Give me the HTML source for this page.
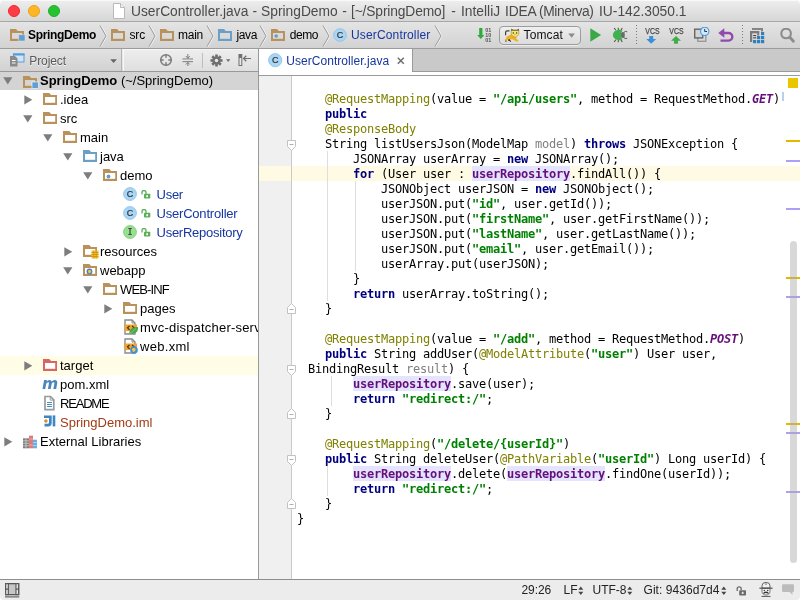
<!DOCTYPE html>
<html>
<head>
<meta charset="utf-8">
<title>UserController.java - SpringDemo</title>
<style>
*{box-sizing:border-box;margin:0;padding:0}
html,body{width:800px;height:600px;overflow:hidden;background:#fff}
body{will-change:transform;font-family:"Liberation Sans",sans-serif;font-size:13px;color:#000;position:relative}
.abs{position:absolute}
#titlebar{position:absolute;left:0;top:0;width:800px;height:22px;background:linear-gradient(#eeeeee,#d6d6d6);border-bottom:1px solid #a8a8a8;border-radius:4px 4px 0 0;box-shadow:inset 0 1px 0 #f9f9f9}
.tl{position:absolute;top:5px;width:12px;height:12px;border-radius:50%}
#title{position:absolute;left:131px;top:2.6px;font-size:13.8px;color:#4a4a4a;white-space:pre;line-height:18px}
#navbar{position:absolute;left:0;top:22px;width:800px;height:27px;background:linear-gradient(#e4e4e4,#d2d2d2);border-bottom:1px solid #9b9b9b}
.nav{position:absolute;top:5px;font-size:12px;line-height:16px;white-space:pre}
#leftpanel{position:absolute;left:0;top:49px;width:259px;height:530px;background:#fff;border-right:1px solid #999}
#lphead{position:absolute;left:0;top:0;width:258px;height:23px;background:linear-gradient(#eeeeee,#dfdfdf);border-bottom:1px solid #999;z-index:2;box-shadow:inset 0 1px 0 #f6f6f6}
.row{position:absolute;left:0;width:258px;height:19px;line-height:19px;font-size:13px;white-space:pre;overflow:hidden}
.row span.t{position:absolute;top:0}
.row svg{position:absolute}
.blue{color:#1636a0}
#tabs{position:absolute;left:259px;top:49px;width:541px;height:27px;background:#fff;border-bottom:1px solid #9a9a9a}
#tabgray{position:absolute;left:153px;top:0;width:388px;height:23px;background:#c9c9c9;border-left:1px solid #9a9a9a;border-bottom:1px solid #9a9a9a}
#gutter{position:absolute;left:259px;top:76px;width:33px;height:503px;background:#f0f0f0;border-right:1px solid #cacaca}
#code{position:absolute;left:292px;top:76px;width:508px;height:503px;background:#fff;overflow:hidden}
.ln{position:absolute;left:5px;height:15px;line-height:15px;font-family:"DejaVu Sans Mono","Liberation Mono",monospace;font-size:12px;letter-spacing:-0.224px;white-space:pre;color:#000}
.kw{color:#000080;font-weight:bold}
.an{color:#808000}
.st{color:#008000;font-weight:bold}
.fd{color:#660e7a;font-weight:bold}
.fdh{color:#660e7a;font-weight:bold;background:#e4e4ff}
.sf{color:#660e7a;font-weight:bold;font-style:italic}
.pm{color:#808080}
#stripe{position:absolute;left:787px;top:76px;width:13px;height:502px;background:#fff}
#status{position:absolute;left:0;top:579px;width:800px;height:21px;background:#ececec;border-top:1px solid #8e8e8e;border-radius:0 0 4px 4px}
.sb{position:absolute;top:2px;font-size:12px;line-height:16px;white-space:pre;color:#222}
</style>
</head>
<body>
<!-- TITLE BAR -->
<div id="titlebar">
  <div class="tl" style="left:8px;background:#fc3d48;border:1px solid #f3242f"></div>
  <div class="tl" style="left:28px;background:#fdb724;border:1px solid #f0a214"></div>
  <div class="tl" style="left:48px;background:#27c232;border:1px solid #1eb02a"></div>
  <svg class="abs" style="left:112px;top:2px" width="14" height="18" viewBox="0 0 14 18"><path d="M1.500 1.500h7l4 4v11h-11z" fill="#fff" stroke="#b9b9b9" stroke-width="1"/><path d="M8.5 1.5v4h4" fill="#f2f2f2" stroke="#b9b9b9" stroke-width="1"/></svg>
  <div id="title"><span class="abs" style="left:0px;top:0;">UserController.java </span><span class="abs" style="left:121.6px;top:0;">- </span><span class="abs" style="left:130px;top:0;">SpringDemo </span><span class="abs" style="left:211.3px;top:0;">- </span><span class="abs" style="left:220px;top:0;letter-spacing:-0.14px">[~/SpringDemo] </span><span class="abs" style="left:320.3px;top:0;">- </span><span class="abs" style="left:330px;top:0;">IntelliJ </span><span class="abs" style="left:374px;top:0;letter-spacing:-0.2px">IDEA </span><span class="abs" style="left:408px;top:0;letter-spacing:-0.42px">(Minerva) </span><span class="abs" style="left:468px;top:0;">IU-142.3050.1</span></div>
</div>
<!-- NAVBAR -->
<div id="navbar"><!--NAV-->
<svg class="abs" style="left:10px;top:7px" width="16" height="14" viewBox="0 0 16 14"><path d="M0 0h6l1.800 2h6.200v9.900h-14z" fill="#b8915b"/><rect x="2" y="4" width="10" height="5.800" fill="#dadada"/><rect x="8.800" y="5.800" width="6.200" height="6.200" fill="#5f9fd2" stroke="#dadada" stroke-width="0.600"/></svg>
<span class="nav" style="left:28px;letter-spacing:-0.33px"><b>SpringDemo</b></span>
<svg class="abs" style="left:99px;top:2px" width="10" height="24" viewBox="0 0 10 24"><path d="M2 1.500l6 10.500l-6 10.500" fill="none" stroke="#f4f4f4" stroke-width="1"/><path d="M1 1.500l6 10.500l-6 10.500" fill="none" stroke="#9c9c9c" stroke-width="1"/></svg>
<svg class="abs" style="left:111px;top:7px" width="16" height="14" viewBox="0 0 16 14"><path d="M0 0h6l1.800 2h6.200v9.900h-14z" fill="#b8915b"/><rect x="2" y="4" width="10" height="5.800" fill="#dadada"/></svg>
<span class="nav" style="left:129.4px;letter-spacing:-0.1px">src</span>
<svg class="abs" style="left:147.5px;top:2px" width="10" height="24" viewBox="0 0 10 24"><path d="M2 1.500l6 10.500l-6 10.500" fill="none" stroke="#f4f4f4" stroke-width="1"/><path d="M1 1.500l6 10.500l-6 10.500" fill="none" stroke="#9c9c9c" stroke-width="1"/></svg>
<svg class="abs" style="left:160px;top:7px" width="16" height="14" viewBox="0 0 16 14"><path d="M0 0h6l1.800 2h6.200v9.900h-14z" fill="#b8915b"/><rect x="2" y="4" width="10" height="5.800" fill="#dadada"/></svg>
<span class="nav" style="left:178px;letter-spacing:-0.25px">main</span>
<svg class="abs" style="left:206px;top:2px" width="10" height="24" viewBox="0 0 10 24"><path d="M2 1.500l6 10.500l-6 10.500" fill="none" stroke="#f4f4f4" stroke-width="1"/><path d="M1 1.500l6 10.500l-6 10.500" fill="none" stroke="#9c9c9c" stroke-width="1"/></svg>
<svg class="abs" style="left:218px;top:7px" width="16" height="14" viewBox="0 0 16 14"><path d="M0 0h6l1.800 2h6.200v9.900h-14z" fill="#6b9fc6"/><rect x="2" y="4" width="10" height="5.800" fill="#dadada"/></svg>
<span class="nav" style="left:236.5px;letter-spacing:-0.38px">java</span>
<svg class="abs" style="left:259px;top:2px" width="10" height="24" viewBox="0 0 10 24"><path d="M2 1.500l6 10.500l-6 10.500" fill="none" stroke="#f4f4f4" stroke-width="1"/><path d="M1 1.500l6 10.500l-6 10.500" fill="none" stroke="#9c9c9c" stroke-width="1"/></svg>
<svg class="abs" style="left:271px;top:7px" width="16" height="14" viewBox="0 0 16 14"><path d="M0 0h6l1.800 2h6.200v9.900h-14z" fill="#b8915b"/><rect x="2" y="4" width="10" height="5.800" fill="#dadada"/><circle cx="5.200" cy="7" r="1.800" fill="#5f9fd2"/></svg>
<span class="nav" style="left:289.7px;letter-spacing:-0.43px">demo</span>
<svg class="abs" style="left:321.6px;top:2px" width="10" height="24" viewBox="0 0 10 24"><path d="M2 1.500l6 10.500l-6 10.500" fill="none" stroke="#f4f4f4" stroke-width="1"/><path d="M1 1.500l6 10.500l-6 10.500" fill="none" stroke="#9c9c9c" stroke-width="1"/></svg>
<svg class="abs" style="left:333px;top:6px" width="14" height="14" viewBox="0 0 14 14"><circle cx="7" cy="7" r="6.300" fill="#aad6f6" stroke="#84bfe9" stroke-width="0.800"/><text x="7" y="10" text-anchor="middle" font-family="Liberation Sans, sans-serif" font-size="9" fill="#333" stroke="#333" stroke-width="0.200">C</text></svg>
<span class="nav" style="left:351px;letter-spacing:0.15px;color:#1636a0">UserController</span>
<svg class="abs" style="left:433.5px;top:2px" width="10" height="24" viewBox="0 0 10 24"><path d="M2 1.500l6 10.500l-6 10.500" fill="none" stroke="#f4f4f4" stroke-width="1"/><path d="M1 1.500l6 10.500l-6 10.500" fill="none" stroke="#9c9c9c" stroke-width="1"/></svg>
<svg class="abs" style="left:476.700px;top:5px" width="18" height="16" viewBox="0 0 18 16"><path d="M2.200 0.900h3.200v7.100h2l-3.600 4.100l-3.600-4.100h2z" fill="#2eaa3e"/><text x="8.300" y="4.8" font-family="Liberation Sans, sans-serif" font-size="5.400" font-weight="bold" fill="#555">01</text><text x="8.300" y="9.7" font-family="Liberation Sans, sans-serif" font-size="5.400" font-weight="bold" fill="#555">10</text><text x="8.300" y="14.7" font-family="Liberation Sans, sans-serif" font-size="5.400" font-weight="bold" fill="#555">01</text></svg>
<div class="abs" style="left:499px;top:4px;width:82px;height:19px;border:1px solid #9c9c9c;border-radius:4px;background:linear-gradient(#efefef,#dcdcdc);box-shadow:0 1px 0 rgba(255,255,255,0.6)"></div>
<svg class="abs" style="left:504px;top:6px" width="16" height="15" viewBox="0 0 16 15"><path d="M1.600 7.200v-2.600q0-1.700 1.700-1.700h2.200" fill="none" stroke="#3a3a3a" stroke-width="1.200"/><path d="M4.600 11l2.200 2.700M2 11.500v2.400M6 11.500l-1.800 1" fill="none" stroke="#3a3a3a" stroke-width="1.100"/><path d="M1.400 12.200l1.400-3.600l4.200-2l3.200 1.500l4.700 5.200l-2.600 0.300l-3.400-2l-4.200-0.600l-1.600 1.200l-0.600 1.800z" fill="#f0b020"/><path d="M7.200 2.300l0.300-1.700l1.700 1.700zM13 2.300l1.600-1.700l0.200 1.700z" fill="#3a3a3a"/><path d="M7.200 2.100h7.600v4.400l-2.600 2.600h-2.400l-2.600-2.600z" fill="#f8e66c" stroke="#7a6a2a" stroke-width="0.500"/><path d="M7.200 2.300h7.600" stroke="#5a4a2a" stroke-width="0.700"/><circle cx="9.300" cy="5" r="0.700" fill="#333"/><circle cx="12.600" cy="5" r="0.700" fill="#333"/><path d="M10.400 6.600h1.200l-0.600 1z" fill="#7a4a2a"/></svg>
<span class="nav" style="left:523.5px;letter-spacing:0.14px;color:#111">Tomcat</span>
<svg class="abs" style="left:568px;top:11px" width="8" height="6" viewBox="0 0 8 6"><path d="M0.300 0.600h6.600l-3.300 4.200z" fill="#8a8a8a"/></svg>
<svg class="abs" style="left:590px;top:6px" width="12" height="15" viewBox="0 0 12 15"><path d="M0.300 0.300l10.800 6.700l-10.800 6.700z" fill="#3aa845"/></svg>
<svg class="abs" style="left:612px;top:5px" width="17" height="16" viewBox="0 0 17 16"><path d="M2.300 1l1.400 2.300M6.300 0.700v2.300M10.300 1l-1.400 2.300M2.300 15l1.400-2.300M6.300 15.300v-2.300M10.300 15l-1.400-2.300" stroke="#555" stroke-width="1.100" fill="none"/><ellipse cx="10.800" cy="8" rx="2" ry="2.900" fill="#6a6a6a"/><path d="M11.800 5.400q1.800-1.700 3.400-0.600M11.800 10.600q1.800 1.700 3.400 0.600" stroke="#555" stroke-width="1" fill="none"/><path d="M10.400 3.400A6.500 5.200 0 1 0 10.400 12.600Q7.600 8 10.400 3.400z" fill="#3fb24f"/></svg>
<div class="abs" style="left:636px;top:3px;width:1px;height:20px;background:repeating-linear-gradient(#7a7a7a 0 1px,transparent 1px 3px)"></div>
<svg class="abs" style="left:644.5px;top:5px" width="16" height="17" viewBox="0 0 16 17"><text x="0.300" y="7.300" font-family="Liberation Sans, sans-serif" font-size="8.600" fill="#4a4a4a" stroke="#4a4a4a" stroke-width="0.250" textLength="14.200" lengthAdjust="spacingAndGlyphs">VCS</text><g transform="translate(1.2,8.800)"><path d="M3 0.300h4v3h3l-5 4.700l-5-4.700h3z" fill="#3d8fd6"/></g></svg>
<svg class="abs" style="left:669px;top:5px" width="16" height="17" viewBox="0 0 16 17"><text x="0.300" y="7.300" font-family="Liberation Sans, sans-serif" font-size="8.600" fill="#4a4a4a" stroke="#4a4a4a" stroke-width="0.250" textLength="14.200" lengthAdjust="spacingAndGlyphs">VCS</text><g transform="translate(2.0,8.800)"><path d="M5 0.300l5 4.700h-3v3h-4v-3h-3z" fill="#3fae49"/></g></svg>
<svg class="abs" style="left:693px;top:5px" width="18" height="17" viewBox="0 0 18 17"><rect x="4.800" y="5.300" width="8" height="9" fill="none" stroke="#9a9a9a" stroke-width="1.400"/><rect x="1.700" y="2.200" width="8" height="8.700" fill="#d4d4d4" stroke="#666" stroke-width="1.400"/><circle cx="11.700" cy="4.300" r="4.200" fill="#cfe7ff" stroke="#4a9be0" stroke-width="1.100"/><path d="M11.700 2v2.500h2.300" stroke="#333" stroke-width="1" fill="none"/></svg>
<svg class="abs" style="left:718px;top:6px" width="17" height="15" viewBox="0 0 17 15"><path d="M3 5h7.500a3.800 3.800 0 0 1 0 7.600h-8" fill="none" stroke="#9149ae" stroke-width="2.400"/><path d="M0.300 5l6-4.800v9.600z" fill="#9149ae"/></svg>
<div class="abs" style="left:742px;top:3px;width:1px;height:20px;background:repeating-linear-gradient(#7a7a7a 0 1px,transparent 1px 3px)"></div>
<svg class="abs" style="left:750px;top:6px" width="16" height="16" viewBox="0 0 16 16"><rect x="2" y="0" width="11" height="2" fill="#858585"/><rect x="11" y="0" width="2" height="3.500" fill="#858585"/><rect x="0" y="3" width="9.200" height="2.300" fill="#7a7a7a"/><rect x="0" y="3" width="2.200" height="11" fill="#7a7a7a"/><rect x="7.200" y="3" width="2" height="4.500" fill="#7a7a7a"/><rect x="3.200" y="7" width="3" height="1.100" fill="#444"/><rect x="3.200" y="9.300" width="3" height="1.100" fill="#444"/><rect x="11" y="4" width="3.200" height="3.200" fill="#2f80bd"/><rect x="11" y="8" width="3.200" height="3.200" fill="#2f80bd"/><rect x="11" y="12" width="3.200" height="3.200" fill="#2f80bd"/><rect x="7" y="8" width="3.200" height="3.200" fill="#2f80bd"/><rect x="7" y="12" width="3.200" height="3.200" fill="#2f80bd"/><rect x="3" y="12" width="3.200" height="3.200" fill="#2f80bd"/></svg>
<svg class="abs" style="left:780px;top:6px" width="16" height="16" viewBox="0 0 16 16"><circle cx="6.100" cy="5.500" r="4.800" fill="none" stroke="#8c8c8c" stroke-width="2.100"/><path d="M9.800 9.300l3.600 3.900" stroke="#8c8c8c" stroke-width="2.800" stroke-linecap="round"/></svg>
<!--/NAV--></div>
<!-- LEFT PANEL -->
<div id="leftpanel">
  <div id="lphead"><!--HEAD-->
<div class="abs" style="left:0;top:0;width:122px;height:22px;background:linear-gradient(#e2e2e2,#d2d2d2);border-right:1px solid #b4b4b4"></div>
<div class="abs" style="left:123px;top:0;width:1px;height:22px;background:#f6f6f6"></div>
<svg class="abs" style="left:9px;top:4px" width="16" height="14" viewBox="0 0 16 14"><rect x="4.500" y="1" width="10.500" height="8" fill="#cfe6fa" stroke="#5b9bd5" stroke-width="1"/><rect x="4" y="0.500" width="11.500" height="2" fill="#5b9bd5"/><path d="M1 3h5l2.500 2.500v8h-7.500z" fill="#8a8a8a"/><path d="M3 7.500h3.500M3 10h3.500" stroke="#fff" stroke-width="1.100"/></svg>
<span class="abs" style="left:29.300px;top:4px;font-size:12px;line-height:16px;color:#5a5a5a;text-shadow:0 1px 0 rgba(255,255,255,0.7);letter-spacing:-0.1px">Project</span>
<svg class="abs" style="left:110px;top:10px" width="8" height="5" viewBox="0 0 8 5"><path d="M0.300 0.300h6.600l-3.300 3.600z" fill="#666"/></svg>
<svg class="abs" style="left:159px;top:4px" width="14" height="14" viewBox="0 0 14 14"><circle cx="7" cy="7" r="5.300" fill="none" stroke="#7c7c7c" stroke-width="1.500"/><path d="M7 1.500v3.200M7 12.500v-3.200M1.500 7h3.200M12.500 7h-3.200" stroke="#7c7c7c" stroke-width="1.500"/></svg>
<svg class="abs" style="left:181.700px;top:4.700px" width="11.700" height="12.600" viewBox="0 0 13 14"><path d="M0.500 5.500h12M0.500 8.500h12" stroke="#7c7c7c" stroke-width="1.100"/><path d="M6.500 0v4.500M6.500 14v-4.500" stroke="#7c7c7c" stroke-width="1.100"/><path d="M4.300 2.300l2.200 2.400l2.200-2.400M4.300 11.700l2.200-2.400l2.200 2.400" fill="none" stroke="#7c7c7c" stroke-width="1.100"/></svg>
<div class="abs" style="left:202px;top:4px;width:1px;height:15px;background:#bdbdbd"></div>
<svg class="abs" style="left:210.400px;top:4.500px" width="13" height="13" viewBox="-7 -7 14 14"><rect x="-1.400" y="-6.500" width="2.800" height="3.200" fill="#6e6e6e" transform="rotate(0)"/><rect x="-1.400" y="-6.500" width="2.800" height="3.200" fill="#6e6e6e" transform="rotate(45)"/><rect x="-1.400" y="-6.500" width="2.800" height="3.200" fill="#6e6e6e" transform="rotate(90)"/><rect x="-1.400" y="-6.500" width="2.800" height="3.200" fill="#6e6e6e" transform="rotate(135)"/><rect x="-1.400" y="-6.500" width="2.800" height="3.200" fill="#6e6e6e" transform="rotate(180)"/><rect x="-1.400" y="-6.500" width="2.800" height="3.200" fill="#6e6e6e" transform="rotate(225)"/><rect x="-1.400" y="-6.500" width="2.800" height="3.200" fill="#6e6e6e" transform="rotate(270)"/><rect x="-1.400" y="-6.500" width="2.800" height="3.200" fill="#6e6e6e" transform="rotate(315)"/><circle r="4.300" fill="#6e6e6e"/><circle r="1.900" fill="#e6e6e6"/></svg>
<svg class="abs" style="left:225.500px;top:10px" width="5" height="4" viewBox="0 0 5 4"><path d="M0 0.300h4.400l-2.200 2.600z" fill="#6e6e6e"/></svg>
<svg class="abs" style="left:238px;top:5px" width="14" height="12" viewBox="0 0 14 12"><rect x="1" y="0.500" width="2.800" height="11" fill="#e9e9e9" stroke="#6e6e6e" stroke-width="1"/><rect x="1" y="0.500" width="2.800" height="3.500" fill="#6e6e6e"/><path d="M5.500 4.500h7.500M8.300 1.800l-2.800 2.700l2.800 2.700" fill="none" stroke="#6e6e6e" stroke-width="1.200"/></svg>
<!--/HEAD--></div>
<!--TREE-->
<div class="row" style="top:22px;background:#d4d4d4;"><svg style="left:3px;top:6px" width="10" height="8" viewBox="0 0 10 8"><path d="M0.2 0.3h9.2l-4.6 7.3z" fill="#7d7d7d"/></svg><svg style="left:23px;top:4.5px" width="16" height="14" viewBox="0 0 16 14"><path d="M0 0h6.300l1.800 2h5.900v9.900h-14z" fill="#b8915b"/><rect x="2" y="4" width="10.200" height="5.800" fill="#d4d4d4"/><rect x="9" y="6" width="6.5" height="6.5" fill="#5f9fd2" stroke="#fff" stroke-width="0.6"/></svg><span class="t " style="left:40px"><b>SpringDemo</b> (~/SpringDemo)</span></div>
<div class="row" style="top:41px;"><svg style="left:24px;top:5px" width="9" height="10" viewBox="0 0 9 10"><path d="M0.3 0.2v9.2l8-4.6z" fill="#7d7d7d"/></svg><svg style="left:43px;top:3px" width="16" height="14" viewBox="0 0 16 14"><path d="M0 0h6.300l1.800 2h5.900v9.900h-14z" fill="#b8915b"/><rect x="2" y="4" width="10.200" height="5.800" fill="#fff"/></svg><span class="t " style="left:60px">.idea</span></div>
<div class="row" style="top:60px;"><svg style="left:23px;top:6px" width="10" height="8" viewBox="0 0 10 8"><path d="M0.2 0.3h9.2l-4.6 7.3z" fill="#7d7d7d"/></svg><svg style="left:43px;top:3px" width="16" height="14" viewBox="0 0 16 14"><path d="M0 0h6.300l1.800 2h5.900v9.900h-14z" fill="#b8915b"/><rect x="2" y="4" width="10.200" height="5.800" fill="#fff"/></svg><span class="t " style="left:60px">src</span></div>
<div class="row" style="top:79px;"><svg style="left:43px;top:6px" width="10" height="8" viewBox="0 0 10 8"><path d="M0.2 0.3h9.2l-4.6 7.3z" fill="#7d7d7d"/></svg><svg style="left:63px;top:3px" width="16" height="14" viewBox="0 0 16 14"><path d="M0 0h6.300l1.800 2h5.900v9.900h-14z" fill="#b8915b"/><rect x="2" y="4" width="10.200" height="5.800" fill="#fff"/></svg><span class="t " style="left:80px">main</span></div>
<div class="row" style="top:98px;"><svg style="left:63px;top:6px" width="10" height="8" viewBox="0 0 10 8"><path d="M0.2 0.3h9.2l-4.6 7.3z" fill="#7d7d7d"/></svg><svg style="left:83px;top:3px" width="16" height="14" viewBox="0 0 16 14"><path d="M0 0h6.300l1.800 2h5.900v9.900h-14z" fill="#6b9fc6"/><rect x="2" y="4" width="10.200" height="5.800" fill="#fff"/></svg><span class="t " style="left:100px">java</span></div>
<div class="row" style="top:117px;"><svg style="left:83px;top:6px" width="10" height="8" viewBox="0 0 10 8"><path d="M0.2 0.3h9.2l-4.6 7.3z" fill="#7d7d7d"/></svg><svg style="left:103px;top:3px" width="16" height="14" viewBox="0 0 16 14"><path d="M0 0h6.300l1.800 2h5.900v9.900h-14z" fill="#b8915b"/><rect x="2" y="4" width="10.200" height="5.800" fill="#fff"/><circle cx="5.5" cy="7.500" r="1.900" fill="#5f9fd2"/></svg><span class="t " style="left:120px">demo</span></div>
<div class="row" style="top:136px;"><svg style="left:123px;top:2px" width="14" height="14" viewBox="0 0 14 14"><circle cx="7" cy="7" r="6.4" fill="#aad6f6" stroke="#84bfe9" stroke-width="0.8"/><text x="7" y="10.0" text-anchor="middle" font-family="Liberation Sans, sans-serif" font-size="9" fill="#333" stroke="#333" stroke-width="0.200">C</text></svg><svg style="left:141px;top:4.5px" width="10" height="10" viewBox="0 0 10 10"><path d="M1 4.5v-2a2 2 0 0 1 4 0v1.5" fill="none" stroke="#5cae5a" stroke-width="1.3"/><rect x="3" y="3.800" width="6.300" height="4.700" rx="0.800" fill="#5cae5a"/><rect x="5.300" y="5.200" width="1.700" height="2" fill="#fff"/></svg><span class="t blue" style="left:156.5px"><span style="letter-spacing:-0.25px">User</span></span></div>
<div class="row" style="top:155px;"><svg style="left:123px;top:2px" width="14" height="14" viewBox="0 0 14 14"><circle cx="7" cy="7" r="6.4" fill="#aad6f6" stroke="#84bfe9" stroke-width="0.8"/><text x="7" y="10.0" text-anchor="middle" font-family="Liberation Sans, sans-serif" font-size="9" fill="#333" stroke="#333" stroke-width="0.200">C</text></svg><svg style="left:141px;top:4.5px" width="10" height="10" viewBox="0 0 10 10"><path d="M1 4.5v-2a2 2 0 0 1 4 0v1.5" fill="none" stroke="#5cae5a" stroke-width="1.3"/><rect x="3" y="3.800" width="6.300" height="4.700" rx="0.800" fill="#5cae5a"/><rect x="5.300" y="5.200" width="1.700" height="2" fill="#fff"/></svg><span class="t blue" style="left:156.5px"><span style="letter-spacing:-0.2px">UserController</span></span></div>
<div class="row" style="top:174px;"><svg style="left:123px;top:2px" width="14" height="14" viewBox="0 0 14 14"><circle cx="7" cy="7" r="6.4" fill="#97e092" stroke="#72c96e" stroke-width="0.8"/><text x="7" y="10.1" text-anchor="middle" font-family="DejaVu Sans Mono, sans-serif" font-size="8.5" fill="#333" stroke="#333" stroke-width="0.200">I</text></svg><svg style="left:141px;top:4.5px" width="10" height="10" viewBox="0 0 10 10"><path d="M1 4.5v-2a2 2 0 0 1 4 0v1.5" fill="none" stroke="#5cae5a" stroke-width="1.3"/><rect x="3" y="3.800" width="6.300" height="4.700" rx="0.800" fill="#5cae5a"/><rect x="5.300" y="5.200" width="1.700" height="2" fill="#fff"/></svg><span class="t blue" style="left:156.5px"><span style="letter-spacing:-0.25px">UserRepository</span></span></div>
<div class="row" style="top:193px;"><svg style="left:64px;top:5px" width="9" height="10" viewBox="0 0 9 10"><path d="M0.3 0.2v9.2l8-4.6z" fill="#7d7d7d"/></svg><svg style="left:83px;top:3px" width="16" height="14" viewBox="0 0 16 14"><path d="M0 0h6.300l1.800 2h5.900v9.900h-14z" fill="#b8915b"/><rect x="2" y="4" width="10.200" height="5.800" fill="#fff"/><rect x="8.500" y="5.500" width="7" height="8" fill="#f4c430"/><path d="M8.500 7.500h7M8.500 9.500h7M8.500 11.500h7M10.800 5.500v8M13.200 5.500v8" stroke="#c98a10" stroke-width="0.7" fill="none"/></svg><span class="t " style="left:100px">resources</span></div>
<div class="row" style="top:212px;"><svg style="left:63px;top:6px" width="10" height="8" viewBox="0 0 10 8"><path d="M0.2 0.3h9.2l-4.6 7.3z" fill="#7d7d7d"/></svg><svg style="left:83px;top:3px" width="16" height="14" viewBox="0 0 16 14"><path d="M0 0h6.300l1.800 2h5.900v9.900h-14z" fill="#b8915b"/><rect x="2" y="4" width="10.200" height="5.800" fill="#fff"/><circle cx="6.500" cy="7.500" r="2.900" fill="#3f7fd0"/><path d="M5 6.500c1.500-1 3-0.300 3.200 0.600c0.200 1-0.600 2-1.800 2.300c-0.900 0-1.400-1.500-1.400-2.900z" fill="#f5c542"/></svg><span class="t " style="left:100px">webapp</span></div>
<div class="row" style="top:231px;"><svg style="left:83px;top:6px" width="10" height="8" viewBox="0 0 10 8"><path d="M0.2 0.3h9.2l-4.6 7.3z" fill="#7d7d7d"/></svg><svg style="left:103px;top:3px" width="16" height="14" viewBox="0 0 16 14"><path d="M0 0h6.300l1.800 2h5.900v9.900h-14z" fill="#b8915b"/><rect x="2" y="4" width="10.200" height="5.800" fill="#fff"/></svg><span class="t " style="left:120px"><span style="letter-spacing:-0.88px">WEB-INF</span></span></div>
<div class="row" style="top:250px;"><svg style="left:104px;top:5px" width="9" height="10" viewBox="0 0 9 10"><path d="M0.3 0.2v9.2l8-4.6z" fill="#7d7d7d"/></svg><svg style="left:123px;top:3px" width="16" height="14" viewBox="0 0 16 14"><path d="M0 0h6.300l1.800 2h5.900v9.900h-14z" fill="#b8915b"/><rect x="2" y="4" width="10.200" height="5.800" fill="#fff"/></svg><span class="t " style="left:140px">pages</span></div>
<div class="row" style="top:269px;"><svg style="left:124px;top:1px" width="16" height="16" viewBox="0 0 16 16"><path d="M1 1h7l3 3v11h-10z" fill="#fff" stroke="#8c8c8c" stroke-width="1.400"/><path d="M8 1v3h3" fill="none" stroke="#8c8c8c" stroke-width="1"/><rect x="0.5" y="5.5" width="12.5" height="6.5" fill="#f0a233"/><path d="M5.5 6.8l-2 2l2 2M8 6.8l2 2l-2 2" fill="none" stroke="#3a2a10" stroke-width="1.1"/><path d="M5.5 14.5c-1-4 3-6.5 8.5-6.5c0.5 4-2 8-8.500 6.500z" fill="#4aa84a"/><path d="M6 14c2-1 4-2.500 6-4.500" stroke="#8fd28a" stroke-width="0.7" fill="none"/></svg><span class="t " style="left:140px"><span style="letter-spacing:0.2px">mvc-dispatcher-servlet.xml</span></span></div>
<div class="row" style="top:288px;"><svg style="left:124px;top:1px" width="16" height="16" viewBox="0 0 16 16"><path d="M1 1h7l3 3v11h-10z" fill="#fff" stroke="#8c8c8c" stroke-width="1.400"/><path d="M8 1v3h3" fill="none" stroke="#8c8c8c" stroke-width="1"/><rect x="0.5" y="5.5" width="12.5" height="6.5" fill="#f0a233"/><path d="M5.5 6.8l-2 2l2 2M8 6.8l2 2l-2 2" fill="none" stroke="#3a2a10" stroke-width="1.1"/><circle cx="10" cy="12" r="3.8" fill="#3f8fd4"/><path d="M8 10.500c1.500-1 3-0.500 3.500 0.500c0.500 1-0.500 2.500-2 3c-1 0-1.500-2-1.500-3.500z" fill="#f3c544"/></svg><span class="t " style="left:140px"><span style="letter-spacing:0.3px">web.xml</span></span></div>
<div class="row" style="top:307px;background:#fffde6;"><svg style="left:24px;top:5px" width="9" height="10" viewBox="0 0 9 10"><path d="M0.3 0.2v9.2l8-4.6z" fill="#7d7d7d"/></svg><svg style="left:43px;top:3px" width="16" height="14" viewBox="0 0 16 14"><path d="M0 0h6.300l1.800 2h5.900v9.900h-14z" fill="#d96663"/><rect x="2" y="4" width="10.200" height="5.800" fill="#fff"/></svg><span class="t " style="left:60px">target</span></div>
<div class="row" style="top:326px;"><span class="t" style="left:42px;top:0px;font-family:'DejaVu Sans',sans-serif;font-style:italic;font-weight:bold;font-size:15.500px;color:#4a86ba;letter-spacing:-1px">m</span><span class="t " style="left:60px">pom.xml</span></div>
<div class="row" style="top:345px;"><svg style="left:43px;top:1px" width="13" height="17" viewBox="0 0 13 17"><path d="M2 1.500h5.500l3.300 3.300v9.900h-8.800z" fill="#fff" stroke="#9a9a9a" stroke-width="1.700"/><path d="M7.200 1.500v3.600h3.600" fill="none" stroke="#9a9a9a" stroke-width="1"/><path d="M4 7.500h5M4 9.500h5M4 11.500h5" stroke="#3a8fd0" stroke-width="1"/></svg><span class="t " style="left:60px"><span style="letter-spacing:-1.2px">README</span></span></div>
<div class="row" style="top:364px;"><svg style="left:43px;top:2.400px" width="14" height="13" viewBox="0 0 14 13"><path d="M1 0.400h7.700v7.600a3.400 3.400 0 0 1-3.400 3.400h-3.800v-2.600h3.300a1.200 1.200 0 0 0 1.200-1.200v-4.600h-5z" fill="#3d86c6"/><rect x="9.700" y="0.400" width="2.600" height="11" fill="#3d86c6"/><circle cx="2.900" cy="6" r="1.700" fill="#e08a1e"/></svg><span class="t " style="left:60px"><span style="color:#a03b14">SpringDemo.iml</span></span></div>
<div class="row" style="top:383px;"><svg style="left:4px;top:5px" width="9" height="10" viewBox="0 0 9 10"><path d="M0.3 0.2v9.2l8-4.6z" fill="#7d7d7d"/></svg><svg style="left:23px;top:3px" width="15" height="14" viewBox="0 0 15 14"><rect x="0" y="3.300" width="6" height="10" fill="#7e7e7e"/><path d="M3 3.300v10M0 5.800h6M0 8.300h6M0 10.800h6" stroke="#d8d8d8" stroke-width="0.700"/><rect x="6" y="0.700" width="4" height="12.600" fill="#e07a7a"/><path d="M6 4h4M6 10h4" stroke="#f4b4b4" stroke-width="0.800"/><rect x="10" y="4.700" width="4" height="8.600" fill="#6aaee0"/><path d="M10 7.500h4M10 10.500h4" stroke="#b4d8f4" stroke-width="0.800"/></svg><span class="t " style="left:40px">External Libraries</span></div>
<!--/TREE-->
</div>
<!-- TABS -->
<div id="tabs"><div id="tabgray"></div><!--TAB-->
<svg class="abs" style="left:8.700px;top:4px" width="15" height="15" viewBox="0 0 15 15"><circle cx="7.200" cy="7.200" r="6.600" fill="#aad6f6" stroke="#84bfe9" stroke-width="0.800"/><text x="7.200" y="10.400" text-anchor="middle" font-family="Liberation Sans, sans-serif" font-size="9" fill="#333" stroke="#333" stroke-width="0.200">C</text></svg>
<span class="abs" style="left:27.200px;top:4px;font-size:12px;line-height:16px;color:#1636a0;letter-spacing:0.05px;white-space:pre">UserController.java</span>
<svg class="abs" style="left:138px;top:8px" width="8" height="8" viewBox="0 0 8 8"><path d="M0.800 0.800l6 6M6.800 0.800l-6 6" stroke="#6e6e6e" stroke-width="1.500"/></svg>
<!--/TAB--></div>
<!-- EDITOR -->
<div id="gutter"><div class="abs" style="left:0;top:90px;width:32px;height:15px;background:#fffae3"></div></div>
<div id="code">
<div class="abs" style="left:0;top:90px;width:508px;height:15px;background:#fffae3"></div>
<div class="abs" style="left:35px;top:75px;width:1px;height:150px;background:#dedede"></div>
<div class="abs" style="left:63px;top:105px;width:1px;height:90px;background:#dedede"></div>
<div class="abs" style="left:39px;top:300px;width:1px;height:30px;background:#dedede"></div>
<div class="abs" style="left:35px;top:390px;width:1px;height:30px;background:#dedede"></div>
<div class="abs" style="left:180px;top:90px;width:98px;height:15px;background:#e4e4ff"></div>
<div class="abs" style="left:61px;top:300px;width:98px;height:15px;background:#e4e4ff"></div>
<div class="abs" style="left:61px;top:390px;width:98px;height:15px;background:#e4e4ff"></div>
<div class="abs" style="left:215px;top:390px;width:98px;height:15px;background:#e4e4ff"></div>
<div class="ln" style="top:16px;left:33px"><span class="an">@RequestMapping</span>(value = <span class="st">"/api/users"</span>, method = RequestMethod.<span class="sf">GET</span>)</div>
<div class="ln" style="top:31px;left:33px"><span class="kw">public</span></div>
<div class="ln" style="top:46px;left:33px"><span class="an">@ResponseBody</span></div>
<div class="ln" style="top:61px;left:33px">String listUsersJson(ModelMap <span class="pm">model</span>) <span class="kw">throws</span> JSONException {</div>
<div class="ln" style="top:76px;left:61px">JSONArray userArray = <span class="kw">new</span> JSONArray();</div>
<div class="ln" style="top:91px;left:61px"><span class="kw">for</span> (User user : <span class="fd">userRepository</span>.findAll()) {</div>
<div class="ln" style="top:106px;left:89px">JSONObject userJSON = <span class="kw">new</span> JSONObject();</div>
<div class="ln" style="top:121px;left:89px">userJSON.put(<span class="st">"id"</span>, user.getId());</div>
<div class="ln" style="top:136px;left:89px">userJSON.put(<span class="st">"firstName"</span>, user.getFirstName());</div>
<div class="ln" style="top:151px;left:89px">userJSON.put(<span class="st">"lastName"</span>, user.getLastName());</div>
<div class="ln" style="top:166px;left:89px">userJSON.put(<span class="st">"email"</span>, user.getEmail());</div>
<div class="ln" style="top:181px;left:89px">userArray.put(userJSON);</div>
<div class="ln" style="top:196px;left:61px">}</div>
<div class="ln" style="top:211px;left:61px"><span class="kw">return</span> userArray.toString();</div>
<div class="ln" style="top:226px;left:33px">}</div>
<div class="ln" style="top:256px;left:33px"><span class="an">@RequestMapping</span>(value = <span class="st">"/add"</span>, method = RequestMethod.<span class="sf">POST</span>)</div>
<div class="ln" style="top:271px;left:33px"><span class="kw">public</span> String addUser(<span class="an">@ModelAttribute</span>(<span class="st">"user"</span>) User user,</div>
<div class="ln" style="top:286px;left:16px">BindingResult <span class="pm">result</span>) {</div>
<div class="ln" style="top:301px;left:61px"><span class="fd">userRepository</span>.save(user);</div>
<div class="ln" style="top:316px;left:61px"><span class="kw">return</span> <span class="st">"redirect:/"</span>;</div>
<div class="ln" style="top:331px;left:33px">}</div>
<div class="ln" style="top:361px;left:33px"><span class="an">@RequestMapping</span>(<span class="st">"/delete/{userId}"</span>)</div>
<div class="ln" style="top:376px;left:33px"><span class="kw">public</span> String deleteUser(<span class="an">@PathVariable</span>(<span class="st">"userId"</span>) Long userId) {</div>
<div class="ln" style="top:391px;left:61px"><span class="fd">userRepository</span>.delete(<span class="fd">userRepository</span>.findOne(userId));</div>
<div class="ln" style="top:406px;left:61px"><span class="kw">return</span> <span class="st">"redirect:/"</span>;</div>
<div class="ln" style="top:421px;left:33px">}</div>
<div class="ln" style="top:436px;left:5px">}</div>
</div><!--/code-->
<svg class="abs" style="left:286px;top:140px" width="11" height="11" viewBox="0 0 11 11"><path d="M1.5 0.5h8v6l-4 4l-4-4z" fill="#fff" stroke="#c2c2c2"/><path d="M3.5 4.5h4" stroke="#b0b0b0"/></svg>
<svg class="abs" style="left:286px;top:303px" width="11" height="11" viewBox="0 0 11 11"><path d="M1.5 10.5h8v-6l-4-4l-4 4z" fill="#fff" stroke="#c2c2c2"/><path d="M3.5 6.5h4" stroke="#b0b0b0"/></svg>
<svg class="abs" style="left:286px;top:365px" width="11" height="11" viewBox="0 0 11 11"><path d="M1.5 0.5h8v6l-4 4l-4-4z" fill="#fff" stroke="#c2c2c2"/><path d="M3.5 4.5h4" stroke="#b0b0b0"/></svg>
<svg class="abs" style="left:286px;top:408px" width="11" height="11" viewBox="0 0 11 11"><path d="M1.5 10.5h8v-6l-4-4l-4 4z" fill="#fff" stroke="#c2c2c2"/><path d="M3.5 6.5h4" stroke="#b0b0b0"/></svg>
<svg class="abs" style="left:286px;top:455px" width="11" height="11" viewBox="0 0 11 11"><path d="M1.5 0.5h8v6l-4 4l-4-4z" fill="#fff" stroke="#c2c2c2"/><path d="M3.5 4.5h4" stroke="#b0b0b0"/></svg>
<svg class="abs" style="left:286px;top:498px" width="11" height="11" viewBox="0 0 11 11"><path d="M1.5 10.5h8v-6l-4-4l-4 4z" fill="#fff" stroke="#c2c2c2"/><path d="M3.5 6.5h4" stroke="#b0b0b0"/></svg>

<div class="abs" style="left:788px;top:78px;width:10px;height:10px;background:#eac600"></div>
<div class="abs" style="left:786px;top:140px;width:14px;height:2px;background:#e5b800"></div>
<div class="abs" style="left:786px;top:160px;width:14px;height:2px;background:#aaa0f5"></div>
<div class="abs" style="left:786px;top:208px;width:14px;height:2px;background:#aaa0f5"></div>
<div class="abs" style="left:786px;top:277px;width:14px;height:2px;background:#e5b800"></div>
<div class="abs" style="left:786px;top:296px;width:14px;height:2px;background:#aaa0f5"></div>
<div class="abs" style="left:786px;top:423px;width:14px;height:2px;background:#e5b800"></div>
<div class="abs" style="left:786px;top:432px;width:14px;height:2px;background:#aaa0f5"></div>
<div class="abs" style="left:786px;top:491px;width:14px;height:2px;background:#aaa0f5"></div>
<div class="abs" style="left:790px;top:241px;width:7px;height:322px;border-radius:3.5px;background:rgba(170,170,170,0.46)"></div>
<div class="abs" style="left:782px;top:92px;width:2px;height:9px;background:#b9cff0"></div>

<!-- STATUS -->
<div id="status"><!--STATUS-->
<svg class="abs" style="left:4px;top:3px" width="16" height="15" viewBox="0 0 16 15"><rect x="1.650" y="0.650" width="13" height="11" fill="#c6c6c6" stroke="#555" stroke-width="1.300"/><rect x="1.650" y="0.650" width="2.700" height="11" fill="#e4e4e4" stroke="#555" stroke-width="1.100"/><rect x="11.950" y="0.650" width="2.700" height="11" fill="#e4e4e4" stroke="#555" stroke-width="1.100"/><path d="M1.650 6.150h2.700M11.950 6.150h2.700" stroke="#555" stroke-width="1.100"/><path d="M1 13.900h14.300" stroke="#555" stroke-width="1.100"/></svg>
<span class="sb" style="left:521.500px;letter-spacing:-0.1px">29:26</span>
<span class="sb" style="left:563.500px">LF</span>
<svg class="abs" style="left:577.5px;top:6px" width="6" height="10" viewBox="0 0 6 10"><path d="M0.300 3.800l2.500-3.200l2.500 3.200zM0.300 5.800l2.500 3.200l2.500-3.200z" fill="#444"/></svg>
<span class="sb" style="left:592.500px">UTF-8</span>
<svg class="abs" style="left:627px;top:6px" width="6" height="10" viewBox="0 0 6 10"><path d="M0.300 3.800l2.500-3.200l2.500 3.200zM0.300 5.800l2.500 3.200l2.500-3.200z" fill="#444"/></svg>
<span class="sb" style="left:643.500px;letter-spacing:0.05px">Git: 9436d7d4</span>
<svg class="abs" style="left:720.5px;top:6px" width="6" height="10" viewBox="0 0 6 10"><path d="M0.300 3.800l2.500-3.200l2.500 3.200zM0.300 5.800l2.500 3.200l2.500-3.200z" fill="#444"/></svg>
<svg class="abs" style="left:736px;top:6px" width="11" height="10" viewBox="0 0 11 10"><path d="M1.200 5v-2.200a2 2 0 0 1 4 0v1.200" fill="none" stroke="#6a6a6a" stroke-width="1.300"/><rect x="3.200" y="4.300" width="6.800" height="5.200" rx="0.800" fill="#6a6a6a"/><rect x="5.800" y="5.800" width="1.700" height="2.200" fill="#ececec"/></svg>
<svg class="abs" style="left:759px;top:2px" width="14" height="16" viewBox="0 0 14 16"><path d="M3 6v-2.200a4 3.400 0 0 1 8 0v2.200z" fill="#f2f2f2" stroke="#555" stroke-width="0.900"/><path d="M7 1.300v1.700" stroke="#555" stroke-width="0.900"/><path d="M3 6.500v2.800c0 2.200 1.800 3.700 4 3.700s4-1.500 4-3.700v-2.800z" fill="#f4f4f4" stroke="#666" stroke-width="0.900"/><path d="M0.400 6.200h13.200" stroke="#555" stroke-width="1.200"/><circle cx="5.300" cy="8.400" r="0.750" fill="#333"/><circle cx="8.700" cy="8.400" r="0.750" fill="#333"/><path d="M4.600 11.500c0.800-1.700 4-1.700 4.800 0" fill="none" stroke="#333" stroke-width="1.300"/><path d="M2.500 14.400h9" stroke="#555" stroke-width="1"/></svg>
<svg class="abs" style="left:782px;top:4px" width="13" height="12" viewBox="0 0 13 12"><path d="M1.200 0.200h9.600a1.200 1.200 0 0 1 1.200 1.200v5.300a1.200 1.200 0 0 1-1.200 1.200h-0.300v2.900l-2.900-2.900h-6.400a1.200 1.200 0 0 1-1.200-1.200v-5.300a1.200 1.200 0 0 1 1.200-1.200z" fill="#bcbcbc"/></svg>
<!--/STATUS--></div>
</body>
</html>
